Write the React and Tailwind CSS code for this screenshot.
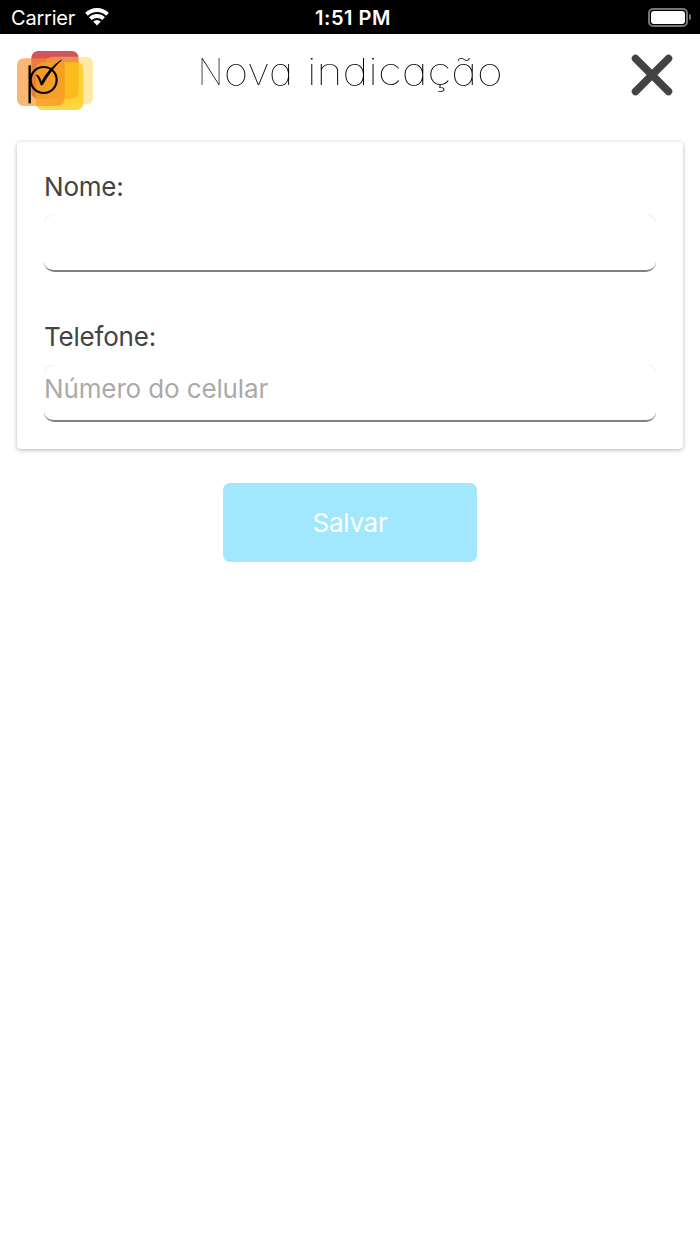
import React from "react"

const Logo = () => {
  return (
    <svg viewBox="21 21 228 177" className="h-[59px] w-[76px]" fill="none">
      <rect x="64" y="21" width="142" height="143" rx="20" fill="#d4535c" />
      <rect x="107" y="38" width="142" height="143" rx="20" fill="#ffd44d" fillOpacity="0.5" />
      <rect x="78" y="55" width="142" height="143" rx="20" fill="#ffc80c" fillOpacity="0.75" />
      <rect x="21" y="43" width="143" height="143" rx="20" fill="#f69028" fillOpacity="0.65" />
      <path d="M59 64V178" stroke="#000" strokeWidth="7" />
      <circle cx="101" cy="108" r="39" stroke="#000" strokeWidth="6.5" />
      <path d="M79 93Q88 92 94 115Q116 72 154 48Q124 76 97 123H93Q86 102 79 93Z" fill="#000" stroke="#000" strokeWidth="2" strokeLinejoin="round" />
    </svg>
  )
}

const StatusBar = () => {
  return (
    <div className="grid h-[34px] grid-cols-3 items-center bg-black pl-[11px] pr-[9px] text-[20px] text-white">
      <div className="flex items-center gap-[10px]">
        <span className="pt-[2px] tracking-[-0.2px]">Carrier</span>
        <svg viewBox="0 0 24 18" className="h-[18px] w-[24px]" fill="none" stroke="#fff" strokeWidth="3.9">
          <path d="M1.5 6.2C7.5 .6 16.5 .6 22.5 6.2" />
          <path d="M5.4 10.6C9 7.2 15 7.2 18.6 10.6" />
          <path d="M12 17.5L8.2 13.6Q12 10.6 15.8 13.6Z" fill="#fff" stroke="none" />
        </svg>
      </div>
      <span className="pl-[4px] pt-[2px] text-center font-semibold tracking-[0.5px]">1:51 PM</span>
      <div className="flex items-center justify-end gap-[1px]">
        <div className="h-[19px] w-[40px] rounded-[5px] border-2 border-[#777] p-[1px]">
          <div className="h-full w-full rounded-[3px] bg-white" />
        </div>
        <div className="h-[6px] w-[2px] rounded-r-full bg-[#777]" />
      </div>
    </div>
  )
}

const Field = ({ label, placeholder }) => {
  return (
    <label className="block">
      <span className="block h-[44px] text-[26px] leading-[32px] tracking-[-0.2px] text-[#434343]">{label}</span>
      <div className="relative before:absolute before:left-0 before:top-0 before:size-[8px] before:rounded-tl-[8px] before:border-l before:border-t before:border-[#f0f0f0] after:absolute after:right-0 after:top-0 after:size-[8px] after:rounded-tr-[8px] after:border-r after:border-t after:border-[#f0f0f0]">
        <input
          placeholder={placeholder}
          className="block h-[57px] w-full rounded-[10px] border-b-2 border-[#808080] bg-transparent pb-[8px] text-[26px] tracking-[-0.13px] outline-none placeholder:text-[#aaa]"
        />
      </div>
    </label>
  )
}

const App = () => {
  return (
    <div className="min-h-[1244px] w-[700px] bg-white font-['Inter',sans-serif] antialiased">
      <StatusBar />

      {/* Header */}
      <header className="flex h-[108px] items-start pl-[17px] pr-[27px] pt-[17px]">
        <Logo />
        <h1 className="ml-[105px] flex whitespace-nowrap text-[37px] font-thin leading-[42px] text-black will-change-transform [font-feature-settings:'cv11']">
          <span className="flex w-[109px]">
            <span className="w-[26px] origin-left scale-x-[0.88]">N</span>
            <span className="origin-left scale-x-[1.12]">ova</span>
          </span>
          <span className="w-[200px] origin-left scale-x-[1.2]">indicação</span>
        </h1>
        <svg viewBox="0 0 42 42" className="ml-auto mt-[3px] h-[42px] w-[42px]" stroke="#434343" strokeWidth="7.5" strokeLinecap="round">
          <path d="M4.5 4.5L37.5 37.5M37.5 4.5L4.5 37.5" />
        </svg>
      </header>

      {/* Form */}
      <main className="px-[17px]">
        <div className="flex h-[307px] flex-col gap-[49px] rounded-[4px] px-[27px] pt-[29px] shadow-[0_1px_4px_rgba(0,0,0,0.3)]">
          <Field label="Nome:" />
          <Field label="Telefone:" placeholder="Número do celular" />
        </div>
        <button className="mx-auto mt-[34px] block h-[79px] w-[254px] rounded-[7px] bg-[#a1e7fd] text-[26px] tracking-[-0.3px] text-white">
          Salvar
        </button>
      </main>
    </div>
  )
}

export default App
